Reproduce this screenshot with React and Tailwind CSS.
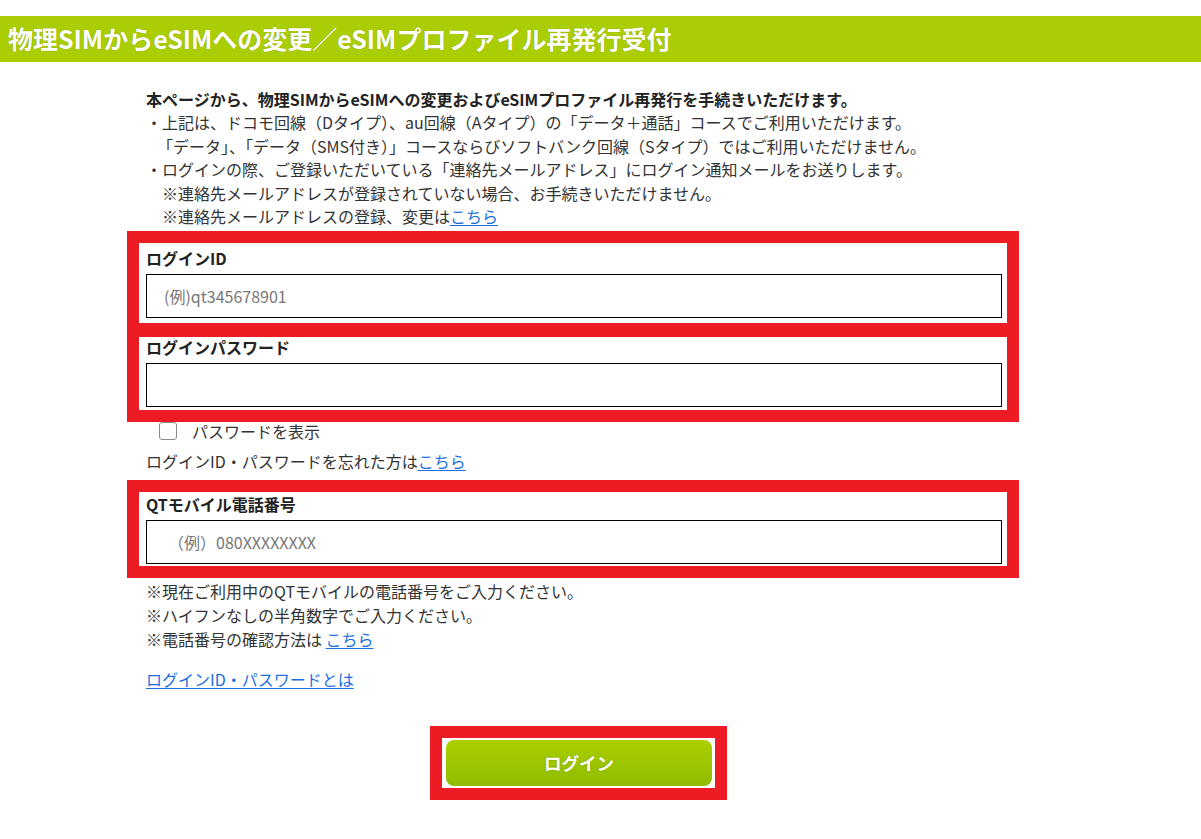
import React from "react";

const font = { fontFamily: '"Noto Sans CJK JP", "Noto Sans", sans-serif' };

function Link({ children }) {
  return <a href="#" className="text-[#1a6fdf] underline underline-offset-2">{children}</a>;
}

function Field({ label, placeholder, type = "text", className = "", inputPad = "pl-[17px]" }) {
  return (
    <div className={`-ml-[19px] -mr-[17px] border-[12px] border-[#ed1c24] bg-white pl-[7px] pr-[5px] ${className}`}>
      <div className="text-[16px] font-bold leading-[20px] text-[#222]">{label}</div>
      <input
        type={type}
        placeholder={placeholder}
        className={`mt-[6px] block h-[44px] w-full border border-black pr-[15px] text-[16px] text-[#333] outline-none placeholder:text-[#777] ${inputPad}`}
        style={font}
      />
    </div>
  );
}

export default function App() {
  return (
    <div className="min-h-screen bg-white pt-4 pb-10 text-[#333]" style={font}>
      {/* Title bar */}
      <h1 className="flex h-[46px] items-center bg-[#abcd03] pl-2 text-[25px] font-bold text-white [text-shadow:0_0_1px_rgba(0,0,0,0.25)]">
        物理SIMからeSIMへの変更／eSIMプロファイル再発行受付
      </h1>

      <div className="ml-[146px] w-[856px]">
        {/* Intro */}
        <div className="mt-[26px] text-[16px] leading-[23.4px]">
          <p className="font-bold text-[#222]">本ページから、物理SIMからeSIMへの変更およびeSIMプロファイル再発行を手続きいただけます。</p>
          <p>・上記は、ドコモ回線（Dタイプ）、au回線（Aタイプ）の「データ＋通話」コースでご利用いただけます。</p>
          <p className="pl-[11px]">「データ」、「データ（SMS付き）」コースならびソフトバンク回線（Sタイプ）ではご利用いただけません。</p>
          <p>・ログインの際、ご登録いただいている「連絡先メールアドレス」にログイン通知メールをお送りします。</p>
          <p className="pl-[1em]">※連絡先メールアドレスが登録されていない場合、お手続きいただけません。</p>
          <p className="pl-[1em]">※連絡先メールアドレスの登録、変更は<Link>こちら</Link></p>
        </div>

        {/* Login ID / password */}
        <div className="mt-[3px]">
          <Field label="ログインID" placeholder="(例)qt345678901" className="pt-[5px] pb-[5px]" />
          <Field label="ログインパスワード" type="password" className="-mt-[10px] pt-0 pb-[3px]" />
        </div>

        <label className="flex h-[18px] items-center text-[16px]">
          <span className="ml-[13px] h-[18px] w-[18px] rounded-[3px] border-[1.5px] border-[#8a8a8a] bg-white" />
          <span className="ml-[15px]">パスワードを表示</span>
        </label>

        <p className="mt-[10px] text-[16px] leading-[23.4px]">
          ログインID・パスワードを忘れた方は<Link>こちら</Link>
        </p>

        {/* Phone number */}
        <Field
          label="QTモバイル電話番号"
          placeholder="（例）080XXXXXXXX"
          className="mt-[6px] pt-[2px] pb-[2px]"
          inputPad="pl-[21px]"
        />

        <div className="mt-[1px] text-[16px] leading-[24px]">
          <p>※現在ご利用中のQTモバイルの電話番号をご入力ください。</p>
          <p>※ハイフンなしの半角数字でご入力ください。</p>
          <p>※電話番号の確認方法は <Link>こちら</Link></p>
        </div>

        <p className="mt-[16px] text-[16px] leading-[24px]">
          <Link>ログインID・パスワードとは</Link>
        </p>

        {/* Button */}
        <div className="mt-[35px] flex justify-center">
          <div className="ml-[9px] border-[12px] border-[#ed1c24] bg-white pl-[4px] pr-[3px] py-[2px]">
            <button
              className="flex h-[46px] w-[266px] items-center justify-center rounded-[8px] bg-gradient-to-b from-[#abd000] to-[#8ebc00] text-[17.5px] font-bold text-white [text-shadow:0_0_2px_rgba(0,0,0,0.2)]"
              style={font}
            >
              ログイン
            </button>
          </div>
        </div>
      </div>
    </div>
  );
}
